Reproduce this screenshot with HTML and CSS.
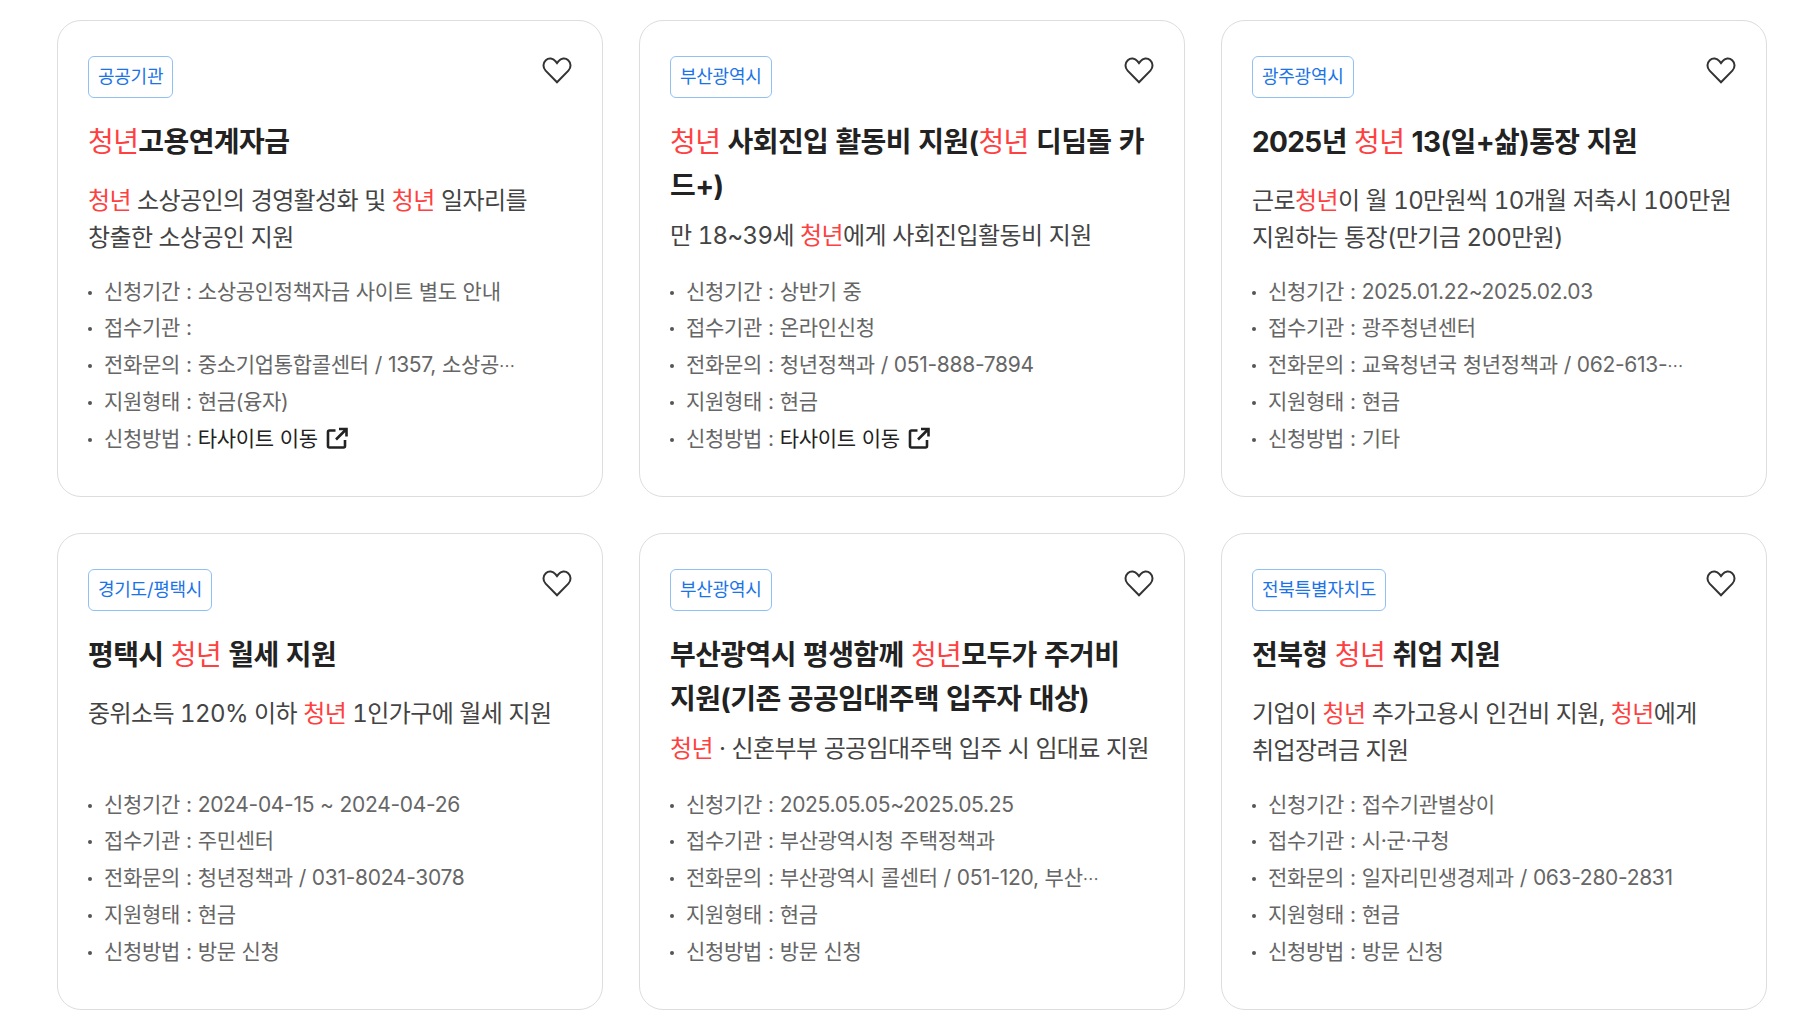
FILE: index.html
```html
<!DOCTYPE html>
<html lang="ko">
<head>
  <meta charset="UTF-8" />
  <title>청년 지원 정책</title>
  <link rel="stylesheet" href="styles.css">
</head>
<body>
  <svg class="sprite" width="0" height="0">
    <symbol id="heart" viewBox="0 0 32 32"><path d="M16 28.2 4.6 16.6C1.7 13.6 1.8 8.9 4.8 6.2c2.9-2.6 7.2-2.1 9.6.9L16 9.2l1.6-2.1c2.4-3 6.7-3.5 9.6-.9 3 2.7 3.100 7.400.2 10.400z"/></symbol>
    <symbol id="external" viewBox="0 0 24 24"><path d="M10.500 4.500H4.500A1.500 1.500 0 0 0 3 6v14A1.500 1.500 0 0 0 4.500 21.500h14a1.500 1.500 0 0 0 1.500-1.500V14"/><path d="M14 3h7.500v7.500M21.500 3 11 13.500"/></symbol>
  </svg>

  <div class="card-grid">
    <article class="card">
      <div class="card-top"><span class="tag">공공기관</span><svg class="heart"><use href="#heart"/></svg></div>
      <h3 class="title"><em>청년</em>고용연계자금</h3>
      <p class="desc"><em>청년</em> 소상공인의 경영활성화 및 <em>청년</em> 일자리를 창출한 소상공인 지원</p>
      <ul class="info">
        <li>신청기간 : 소상공인정책자금 사이트 별도 안내</li>
        <li>접수기관 :</li>
        <li>전화문의 : 중소기업통합콜센터 / 1357, 소상공<span class="more">…</span></li>
        <li>지원형태 : 현금(융자)</li>
        <li>신청방법 : <a class="link">타사이트 이동<svg class="ext"><use href="#external"/></svg></a></li>
      </ul>
    </article>

    <article class="card">
      <div class="card-top"><span class="tag">부산광역시</span><svg class="heart"><use href="#heart"/></svg></div>
      <h3 class="title"><em>청년</em> 사회진입 활동비 지원(<em>청년</em> 디딤돌 카드+)</h3>
      <p class="desc after-long">만 18~39세 <em>청년</em>에게 사회진입활동비 지원</p>
      <ul class="info">
        <li>신청기간 : 상반기 중</li>
        <li>접수기관 : 온라인신청</li>
        <li>전화문의 : 청년정책과 / 051-888-7894</li>
        <li>지원형태 : 현금</li>
        <li>신청방법 : <a class="link">타사이트 이동<svg class="ext"><use href="#external"/></svg></a></li>
      </ul>
    </article>

    <article class="card">
      <div class="card-top"><span class="tag">광주광역시</span><svg class="heart"><use href="#heart"/></svg></div>
      <h3 class="title">2025년 <em>청년</em> 13(일+삶)통장 지원</h3>
      <p class="desc">근로<em>청년</em>이 월 10만원씩 10개월 저축시 100만원 지원하는 통장(만기금 200만원)</p>
      <ul class="info">
        <li>신청기간 : 2025.01.22~2025.02.03</li>
        <li>접수기관 : 광주청년센터</li>
        <li>전화문의 : 교육청년국 청년정책과 / 062-613-<span class="more">…</span></li>
        <li>지원형태 : 현금</li>
        <li>신청방법 : 기타</li>
      </ul>
    </article>

    <article class="card">
      <div class="card-top"><span class="tag">경기도/평택시</span><svg class="heart"><use href="#heart"/></svg></div>
      <h3 class="title">평택시 <em>청년</em> 월세 지원</h3>
      <p class="desc">중위소득 120% 이하 <em>청년</em> 1인가구에 월세 지원</p>
      <ul class="info">
        <li>신청기간 : 2024-04-15 ~ 2024-04-26</li>
        <li>접수기관 : 주민센터</li>
        <li>전화문의 : 청년정책과 / 031-8024-3078</li>
        <li>지원형태 : 현금</li>
        <li>신청방법 : 방문 신청</li>
      </ul>
    </article>

    <article class="card">
      <div class="card-top"><span class="tag">부산광역시</span><svg class="heart"><use href="#heart"/></svg></div>
      <h3 class="title">부산광역시 평생함께 <em>청년</em>모두가 주거비 지원(기존 공공임대주택 입주자 대상)</h3>
      <p class="desc after-long"><em>청년</em> · 신혼부부 공공임대주택 입주 시 임대료 지원</p>
      <ul class="info">
        <li>신청기간 : 2025.05.05~2025.05.25</li>
        <li>접수기관 : 부산광역시청 주택정책과</li>
        <li>전화문의 : 부산광역시 콜센터 / 051-120, 부산<span class="more">…</span></li>
        <li>지원형태 : 현금</li>
        <li>신청방법 : 방문 신청</li>
      </ul>
    </article>

    <article class="card">
      <div class="card-top"><span class="tag">전북특별자치도</span><svg class="heart"><use href="#heart"/></svg></div>
      <h3 class="title">전북형 <em>청년</em> 취업 지원</h3>
      <p class="desc">기업이 <em>청년</em> 추가고용시 인건비 지원, <em>청년</em>에게 취업장려금 지원</p>
      <ul class="info">
        <li>신청기간 : 접수기관별상이</li>
        <li>접수기관 : 시·군·구청</li>
        <li>전화문의 : 일자리민생경제과 / 063-280-2831</li>
        <li>지원형태 : 현금</li>
        <li>신청방법 : 방문 신청</li>
      </ul>
    </article>
  </div>
</body>
</html>
```

FILE: styles.css
```css
* {
  box-sizing: border-box;
}
body {
  margin: 0;
  background-color: #fff;
  color: #222;
  font-family: Inter, "Noto Sans CJK KR", sans-serif;
  overflow: hidden;
}
.sprite {
  display: none;
}
em {
  font-style: normal;
  font-weight: 400;
  color: #ff4040;
}
.card-grid {
  display: grid;
  grid-template-columns: repeat(3, 546px);
  gap: 36px;
  padding: 20px 0 0 57px;
}
.card {
  display: flex;
  flex-direction: column;
  height: 477px;
  padding: 35px 30px 38.500px;
  border: 1px solid #ddd;
  border-radius: 24px;
}
.card-top {
  display: flex;
  justify-content: space-between;
  align-items: flex-start;
}
.tag {
  height: 42px;
  padding: 0 9px;
  border: 1px solid #8fc1f5;
  border-radius: 6px;
  color: #1a73e8;
  font-size: 18px;
  line-height: 40px;
  letter-spacing: -0.25px;
}
.heart {
  width: 32px;
  height: 32px;
  margin: -2px -1px 0 0;
  fill: none;
  stroke: #333;
  stroke-width: 2;
}
.title {
  margin: 22px 0 0;
  padding-right: 4px;
  font-size: 28px;
  font-weight: 700;
  line-height: 44px;
  letter-spacing: -0.6px;
  word-spacing: 1.2px;
  color: #222;
}
.desc {
  margin: 18px 0 0;
  font-size: 24px;
  line-height: 37px;
  letter-spacing: -0.6px;
  word-spacing: 0.3px;
  font-variant-numeric: tabular-nums;
  color: #444;
  word-break: keep-all;
}
.desc.after-long {
  margin-top: 9px;
}
.info {
  margin: auto 0 0;
  padding: 0;
  list-style: none;
}
.info li {
  position: relative;
  padding-left: 16px;
  font-size: 21px;
  line-height: 36.8px;
  letter-spacing: -0.3px;
  word-spacing: 0.3px;
  color: #666;
  white-space: nowrap;
}
.info li::before {
  content: "";
  position: absolute;
  left: 0;
  top: 17px;
  width: 4px;
  height: 4px;
  border-radius: 50%;
  background-color: #555;
}
.more {
  font-family: "Noto Sans CJK JP", sans-serif;
  font-size: 16px;
  letter-spacing: 0;
}
.link {
  color: #222;
}
.ext {
  width: 24px;
  height: 24px;
  margin-left: 7px;
  vertical-align: -4px;
  fill: none;
  stroke: #222;
  stroke-width: 2.6;
}
```
